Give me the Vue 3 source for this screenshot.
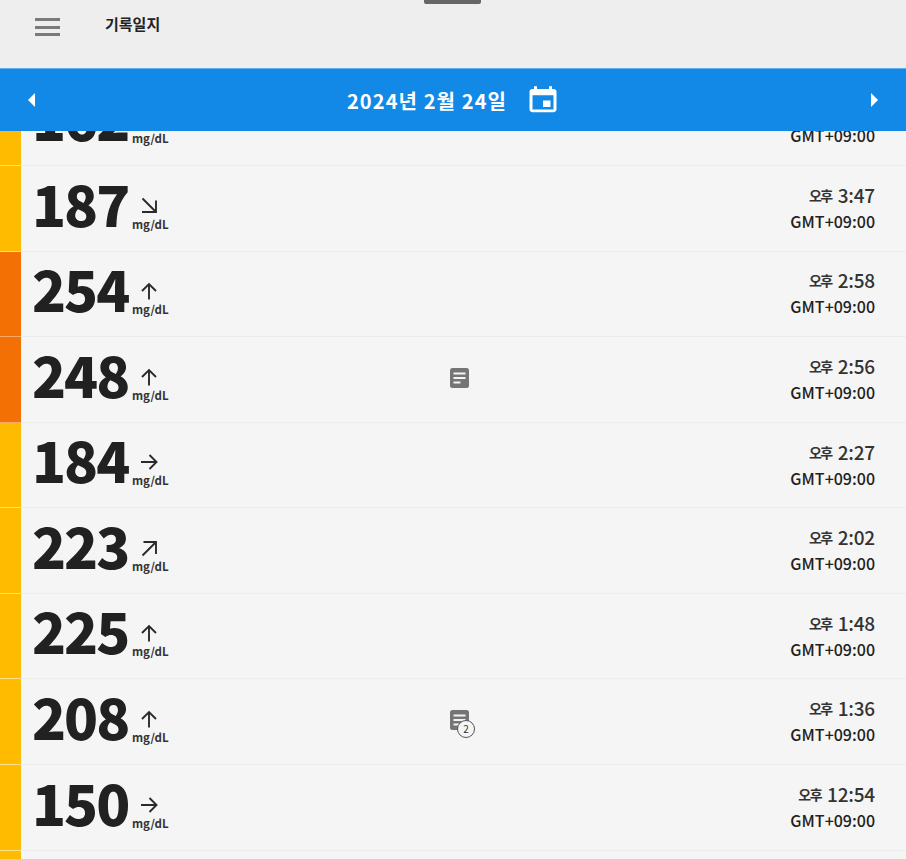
<script setup>
const rows = [
  { value: 162, level: 'high', hour: '3:58', trend: 'up' },
  { value: 187, level: 'high', hour: '3:47', trend: 'downRight' },
  { value: 254, level: 'veryHigh', hour: '2:58', trend: 'up' },
  { value: 248, level: 'veryHigh', hour: '2:56', trend: 'up', notes: 1 },
  { value: 184, level: 'high', hour: '2:27', trend: 'right' },
  { value: 223, level: 'high', hour: '2:02', trend: 'upRight' },
  { value: 225, level: 'high', hour: '1:48', trend: 'up' },
  { value: 208, level: 'high', hour: '1:36', trend: 'up', notes: 2 },
  { value: 150, level: 'high', hour: '12:54', trend: 'right' },
  { value: 172, level: 'high', hour: '12:40', trend: 'right' }
]

const arrows = {
  up: 'M9 17.5V2M2 9L9 2L16 9',
  right: 'M1 9H16.5M9.5 2L16.5 9L9.5 16',
  upRight: 'M2.5 16.5L16 3M3.5 3H16V15',
  downRight: 'M2.5 1.5L16 15M16 3.5V15H2'
}
</script>

<template>
  <div class="page">
    <header class="toolbar">
      <div class="grabber"></div>
      <div class="menu"><span></span><span></span><span></span></div>
      <h1>기록일지</h1>
    </header>

    <div class="datebar">
      <span class="tri tri-left"></span>
      <div class="date">
        <span>2024년 2월 24일</span>
        <svg width="36" height="31" viewBox="0 0 24 24" preserveAspectRatio="none" fill="#fff">
          <path d="M17 12h-5v5h5v-5zM16 1v2H8V1H6v2H5c-1.11 0-1.99.9-1.99 2L3 19c0 1.1.89 2 2 2h14c1.1 0 2-.9 2-2V5c0-1.1-.9-2-2-2h-1V1h-2zm3 18H5V8h14v11z" />
        </svg>
      </div>
      <span class="tri tri-right"></span>
    </div>

    <div class="list">
      <div class="scroll">
        <div v-for="row in rows" :key="row.hour" class="row">
          <div class="level" :class="row.level"></div>
          <div class="reading">
            <span class="value">{{ row.value }}</span>
            <div class="side">
              <svg class="arrow" width="18" height="18" viewBox="0 0 18 18" fill="none" stroke="#2a2a2a" stroke-width="1.9">
                <path :d="arrows[row.trend]" />
              </svg>
              <span class="unit">mg/dL</span>
            </div>
          </div>
          <div class="note">
            <div v-if="row.notes" class="note-icon">
              <svg width="19" height="20" viewBox="0 0 19 20">
                <rect width="19" height="20" rx="2.5" fill="#757575" />
                <path d="M3.5 5.5h12M3.5 10h12M3.5 14.5h7" stroke="#f4f4f4" stroke-width="2" />
              </svg>
              <span v-if="row.notes > 1" class="badge">{{ row.notes }}</span>
            </div>
          </div>
          <div class="when">
            <span class="time"><span class="ampm">오후</span>{{ row.hour }}</span>
            <span class="zone">GMT+09:00</span>
          </div>
        </div>
      </div>
    </div>
  </div>
</template>

<style scoped>
.page {
  width: 906px;
  height: 859px;
  display: flex;
  flex-direction: column;
  overflow: hidden;
  background: #f5f5f5;
  font-family: "Noto Sans CJK KR", "Noto Sans", sans-serif;
  color: #212121;
}

.toolbar {
  position: relative;
  flex: none;
  height: 68px;
  display: flex;
  align-items: flex-start;
  padding: 18px 0 0 35px;
  box-sizing: border-box;
  background: #eeeeee;
}
.grabber {
  position: absolute;
  left: 424px;
  top: 0;
  width: 57px;
  height: 4px;
  border-radius: 0 0 2px 2px;
  background: #666;
}
.menu {
  width: 25px;
  display: flex;
  flex-direction: column;
  gap: 4.5px;
}
.menu span {
  height: 3px;
  background: #7a7a7a;
}
h1 {
  margin: -6px 0 0 45px;
  font-size: 15px;
  line-height: 24px;
  font-weight: 700;
  color: #222;
}

.datebar {
  position: relative;
  z-index: 2;
  flex: none;
  height: 62px;
  display: flex;
  align-items: center;
  justify-content: space-between;
  padding: 0 28px;
  background: #1289e6;
  border-top: 1px solid #5fb0f0;
}
.tri {
  width: 0;
  height: 0;
  border-top: 7px solid transparent;
  border-bottom: 7px solid transparent;
}
.tri-left { border-right: 7px solid #fff; }
.tri-right { border-left: 7px solid #fff; }
.date {
  display: flex;
  align-items: center;
  gap: 18px;
  margin-left: 2px;
  color: #fff;
  font-size: 20px;
  font-weight: 700;
  letter-spacing: 1.1px;
}

.list {
  flex: 1;
  min-height: 0;
  overflow: hidden;
}
.scroll {
  margin-top: -50.4px;
}
.row {
  height: 85.56px;
  display: flex;
  border-bottom: 1px solid #ececec;
  box-sizing: border-box;
}
.level {
  flex: none;
  width: 21px;
  margin-bottom: -1px;
  border-bottom: 1px solid #ffe08a;
}
.level.high { background: #ffbb00; }
.level.veryHigh { background: #f37005; border-bottom-color: #f9a866; }

.reading {
  flex: none;
  width: 400px;
  display: flex;
  align-items: flex-end;
  padding-left: 11px;
  padding-bottom: 20px;
  box-sizing: border-box;
}
.value {
  width: 96px;
  font-size: 56px;
  line-height: 56px;
  font-weight: 900;
  letter-spacing: -2px;
  text-align: right;
}
.side {
  display: flex;
  flex-direction: column;
  align-items: flex-start;
  margin-left: 4px;
  margin-bottom: -1px;
}
.arrow {
  margin: 0 0 1px 8px;
}
.unit {
  font-size: 11.5px;
  line-height: 16px;
  font-weight: 700;
  color: #333;
}

.note {
  flex: 1;
  display: flex;
  align-items: center;
  padding-left: 29px;
  padding-bottom: 3px;
}
.note-icon {
  position: relative;
  width: 19px;
  height: 20px;
}
.note-icon svg { display: block; }
.badge {
  position: absolute;
  left: 7px;
  top: 10px;
  width: 16px;
  height: 16px;
  border: 1px solid #555;
  border-radius: 50%;
  background: #f5f5f5;
  font-size: 10px;
  line-height: 16px;
  text-align: center;
  color: #333;
}

.when {
  flex: none;
  width: 300px;
  display: flex;
  flex-direction: column;
  align-items: flex-end;
  justify-content: center;
  padding-right: 31px;
  padding-bottom: 1px;
  box-sizing: border-box;
}
.time {
  font-size: 19px;
  line-height: 26px;
  font-weight: 500;
  letter-spacing: -0.2px;
  color: #333;
}
.ampm {
  margin-right: 6px;
  font-size: 14px;
  font-weight: 700;
  letter-spacing: -1.5px;
  vertical-align: 2px;
}
.zone {
  font-size: 16px;
  line-height: 26px;
  font-weight: 500;
  color: #212121;
}
</style>

<style>
html, body { margin: 0; background: #f5f5f5; }
</style>
